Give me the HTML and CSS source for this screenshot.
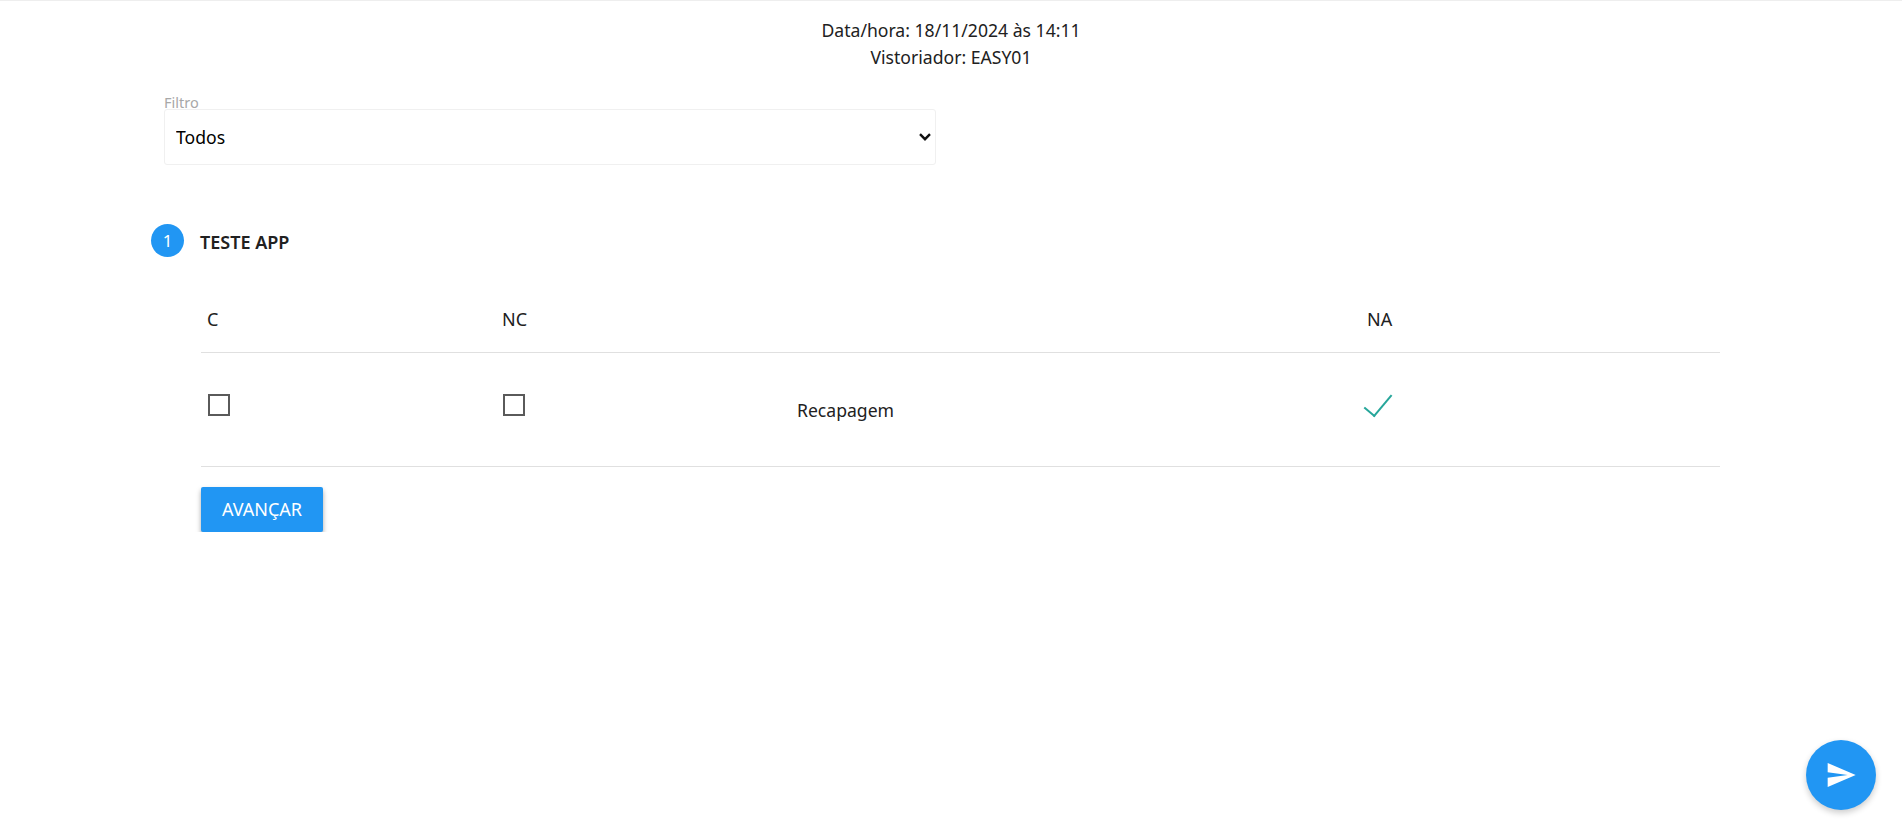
FILE: index.html
```html
<!DOCTYPE html>
<html lang="pt-BR">
<head>
  <meta charset="UTF-8" />
  <meta name="viewport" content="width=device-width, initial-scale=1.0">
  <title>Vistoria</title>
  <link rel="stylesheet" href="styles.css">
</head>
<body>

  <div class="info">
    <p>Data/hora: 18/11/2024 às 14:11</p>
    <p>Vistoriador: EASY01</p>
  </div>

  <div class="filter">
    <label class="filter-label" for="filtro">Filtro</label>
    <select id="filtro" class="filter-select">
      <option>Todos</option>
    </select>
  </div>

  <div class="step-header">
    <span class="step-number">1</span>
    <span class="step-title">TESTE APP</span>
  </div>

  <div class="step-content">
    <table class="items">
      <thead>
        <tr>
          <th class="col-c">C</th>
          <th class="col-nc">NC</th>
          <th class="col-name"></th>
          <th>NA</th>
        </tr>
      </thead>
      <tbody>
        <tr>
          <td><span class="check"></span></td>
          <td><span class="check"></span></td>
          <td class="item-name">Recapagem</td>
          <td><span class="check checked"></span></td>
        </tr>
      </tbody>
    </table>

    <button class="button">AVANÇAR</button>
  </div>

  <button class="fab" aria-label="Enviar">
    <svg viewBox="0 0 24 24" width="32" height="32"><path d="M2.01 21L23 12 2.01 3 2 10l15 2-15 2z" fill="#fff"/></svg>
  </button>

</body>
</html>
```

FILE: styles.css
```css
* {
  box-sizing: border-box;
}

body {
  margin: 0;
  border-top: 1px solid #eeeeee;
  background: #fff;
  font-family: 'Noto Sans', 'Open Sans', sans-serif;
  font-size: 17.6px;
  color: #212121;
}

.info {
  padding-top: 16px;
  text-align: center;
  line-height: 27px;
}

.info p {
  margin: 0;
}

.filter {
  width: 772px;
  margin: 24px 0 0 164px;
}

.filter-label {
  display: block;
  height: 14px;
  font-size: 14.5px;
  line-height: 14px;
  color: #a8a8a8;
}

.filter-select {
  display: block;
  width: 100%;
  height: 56px;
  padding: 0 11px;
  appearance: none;
  background: #fff url("data:image/svg+xml,%3Csvg xmlns='http://www.w3.org/2000/svg' width='12' height='8'%3E%3Cpath d='M1 1.2l5 5 5-5' fill='none' stroke='%23111' stroke-width='2.4'/%3E%3C/svg%3E") no-repeat right 4px center;
  border: 1px solid #f0f0f0;
  border-radius: 3px;
  font-family: inherit;
  font-size: 17.6px;
  color: #000;
}

.step-header {
  display: flex;
  align-items: center;
  margin: 59px 0 0 151px;
}

.step-number {
  width: 33px;
  height: 33px;
  margin-right: 16px;
  border-radius: 50%;
  background: #2196f3;
  color: #fff;
  font-size: 17px;
  line-height: 33px;
  text-align: center;
}

.step-title {
  padding-top: 2px;
  font-size: 18px;
  font-weight: 600;
}

.step-content {
  width: 1519px;
  margin: 28px 0 0 201px;
}

.items {
  width: 100%;
  border-collapse: collapse;
  table-layout: fixed;
}

.items th {
  height: 67px;
  padding: 2px 6px 0;
  font-size: 18px;
  font-weight: 400;
  text-align: left;
  border-bottom: 1px solid #e0e0e0;
}

.items td {
  height: 114px;
  padding: 0 6px;
  border-bottom: 1px solid #e0e0e0;
}

.col-c {
  width: 295px;
}

.col-nc {
  width: 295px;
}

.col-name {
  width: 570px;
}

.items .item-name {
  font-size: 17.6px;
  padding-top: 1px;
}

.check {
  display: block;
  width: 22px;
  height: 22px;
  margin: -8px 0 0 1px;
  border: 2px solid #5a5a5a;
}

.check.checked {
  width: 14px;
  height: 28px;
  margin: -15px 0 0 4px;
  border: 0;
  border-right: 2px solid #26a69a;
  border-bottom: 2px solid #26a69a;
  transform: rotate(40deg);
}

.button {
  display: block;
  width: 122px;
  height: 45px;
  margin-top: 20px;
  border: none;
  border-radius: 2px;
  background: #2196f3;
  color: #fff;
  font-family: inherit;
  font-size: 18px;
  box-shadow: 0 3px 5px rgba(0,0,0,0.35);
}

.fab {
  position: fixed;
  right: 26px;
  bottom: 17px;
  display: flex;
  align-items: center;
  justify-content: center;
  width: 70px;
  height: 70px;
  border: none;
  border-radius: 50%;
  background: #2196f3;
  box-shadow: 0 3px 6px rgba(0,0,0,0.2);
}
```
